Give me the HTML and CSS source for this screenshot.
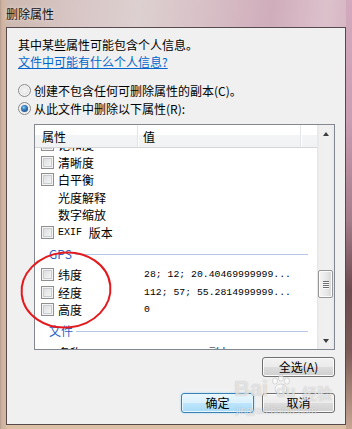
FILE: index.html
```html
<!DOCTYPE html>
<html lang="zh-CN">
<head>
<meta charset="utf-8">
<title>删除属性</title>
<link rel="stylesheet" href="styles.css">
</head>
<body>
<div class="window">
  <div class="titlebar"><span class="title">删除属性</span></div>
  <div class="client">
    <p class="intro">其中某些属性可能包含个人信息。</p>
    <a class="link">文件中可能有什么个人信息?</a>
    <div class="options">
      <div class="option"><span class="radio"></span><span>创建不包含任何可删除属性的副本(C)。</span></div>
      <div class="option"><span class="radio checked"></span><span>从此文件中删除以下属性(R):</span></div>
    </div>
    <div class="listbox">
      <div class="listmain">
        <div class="header">
          <div class="hcol c1">属性</div>
          <div class="hcol c2">值</div>
          <div class="hcol c3"></div>
        </div>
        <div class="rows">
          <div class="rows-inner">
            <div class="row"><div class="name"><span class="cb"></span>饱和度</div><div class="val"></div></div>
            <div class="row"><div class="name"><span class="cb"></span>清晰度</div><div class="val"></div></div>
            <div class="row"><div class="name"><span class="cb"></span>白平衡</div><div class="val"></div></div>
            <div class="row"><div class="name indent">光度解释</div><div class="val"></div></div>
            <div class="row"><div class="name indent">数字缩放</div><div class="val"></div></div>
            <div class="row"><div class="name"><span class="cb"></span><span class="mono">EXIF</span>&nbsp;版本</div><div class="val"></div></div>
            <div class="group"><span class="gtitle">GPS</span><span class="gline"></span></div>
            <div class="row"><div class="name"><span class="cb"></span>纬度</div><div class="val">28; 12; 20.40469999999...</div></div>
            <div class="row"><div class="name"><span class="cb"></span>经度</div><div class="val">112; 57; 55.2814999999...</div></div>
            <div class="row"><div class="name"><span class="cb"></span>高度</div><div class="val">0</div></div>
            <div class="group"><span class="gtitle">文件</span><span class="gline"></span></div>
            <div class="row"><div class="name indent">名称</div><div class="val">IMG_0012 - 副本.JPG</div></div>
          </div>
        </div>
      </div>
      <div class="scrollbar">
        <div class="sb-arrow"><span class="tri-up"></span></div>
        <div class="thumb"><span class="grip"></span><span class="grip"></span><span class="grip"></span><span class="grip"></span></div>
        <div class="sb-space"></div>
        <div class="sb-arrow"><span class="tri-down"></span></div>
      </div>
    </div>
    <div class="actions">
      <div class="btnrow first"><button class="btn">全选(A)</button></div>
      <div class="btnrow second"><button class="btn default">确定</button><button class="btn">取消</button></div>
    </div>
  </div>
  <svg class="mark" width="352" height="429" viewBox="0 0 352 429">
    <ellipse cx="66" cy="290" rx="44.5" ry="37.5" transform="rotate(-6 66 290)" fill="none" stroke="#e31b1f" stroke-width="2"/>
  </svg>
  <div class="watermark">
    <span class="wm-bai">Bai</span>
    <svg class="wm-paw" width="22" height="24" viewBox="0 0 22 24">
      <g fill="rgba(255,255,255,0.55)" stroke="rgba(140,140,140,0.35)" stroke-width="0.8">
        <ellipse cx="5" cy="7" rx="2.5" ry="3.2"/>
        <ellipse cx="11" cy="4" rx="2.5" ry="3.2"/>
        <ellipse cx="17" cy="7" rx="2.5" ry="3.2"/>
        <ellipse cx="11" cy="15" rx="6" ry="5"/>
      </g>
    </svg>
    <span class="wm-du">du</span>
    <span class="wm-jy">经验</span>
    <span class="wm-url">jingyan.baidu.com</span>
  </div>
</div>
</body>
</html>
```

FILE: styles.css
```css
* { box-sizing: border-box; margin: 0; padding: 0; }
html, body { width: 352px; height: 429px; overflow: hidden; }
body {
  font-family: "Noto Sans CJK SC", "Noto Sans", sans-serif;
  font-size: 12px;
  color: #000;
  background: #d8c4c4;
}

.window {
  position: relative;
  width: 352px;
  height: 429px;
  display: flex;
  flex-direction: column;
  padding: 0 6px 4px 6px;
  background:
    linear-gradient(180deg, #d3aabd 0, #c99db2 120px, #a47c8a 220px, #6c4a4f 290px, #7b5a58 350px, #c8a693 429px) right top / 6px 100% no-repeat,
    linear-gradient(90deg, #b59c8e 0, #cfb4a3 2px, #d4b7a1 6px) left top / 6px 100% no-repeat,
    linear-gradient(180deg, rgba(0,0,0,0) 424px, #dcc0a6 424px),
    linear-gradient(95deg, #cbb7ad 0%, #d7c5c4 18%, #ddd0d0 36%, #d8c1c7 52%, #d0adbb 70%, #dcc1cb 84%, #cda4b6 100%);
}

.titlebar {
  height: 27px;
  display: flex;
  align-items: center;
}
.title {
  font-size: 12px;
  line-height: 14px;
  color: #111;
  text-shadow: 0 0 4px rgba(255,255,255,0.7);
}

.client {
  flex: 1;
  border: 1px solid #564a4c;
  background: #f0f0f0;
  padding: 8px 10px 0 11px;
  display: flex;
  flex-direction: column;
}

.intro { line-height: 17px; height: 17px; }
.link {
  display: block;
  line-height: 17px;
  height: 17px;
  color: #0066cc;
  text-decoration: underline;
  width: max-content;
}

.options { margin-top: 11px; display: flex; flex-direction: column; }
.option { display: flex; align-items: center; height: 18px; gap: 3px; }
.radio {
  width: 13px;
  height: 13px;
  border-radius: 50%;
  border: 1px solid #8a8a8a;
  background: radial-gradient(circle at 50% 50%, #f6f6f6 0, #e4e4e4 60%, #d2d2d2 100%);
  box-shadow: inset 0 0 0 1px #f8f8f8;
  display: flex;
  align-items: center;
  justify-content: center;
  flex: none;
}
.radio.checked::after {
  content: "";
  width: 7px;
  height: 7px;
  border-radius: 50%;
  background: radial-gradient(circle at 40% 35%, #8fd3f7 0, #3a7fc0 35%, #163f70 100%);
}

.listbox {
  margin-top: 7px;
  margin-left: 16px;
  width: 301px;
  height: 226px;
  border: 1px solid #828790;
  display: flex;
  background: #fff;
}
.listmain { flex: 1; display: flex; flex-direction: column; min-width: 0; }
.header {
  height: 23px;
  display: flex;
  border-bottom: 1px solid #d5d5d5;
  background: linear-gradient(180deg, #ffffff 0, #ffffff 10px, #f3f4f6 10px, #f1f2f4 100%);
}
.hcol {
  display: flex;
  align-items: center;
  padding-top: 1px;
  border-right: 1px solid #e2e4e7;
  box-shadow: 1px 0 0 #ffffff;
}
.c1 { width: 103px; padding-left: 7px; }
.c2 { width: 163px; padding-left: 5px; }
.c3 { flex: 1; border-right: none; box-shadow: none; }

.rows { flex: 1; overflow: hidden; background: #fff; }
.rows-inner { margin-top: -12px; }
.row {
  height: 17.5px;
  display: grid;
  grid-template-columns: 103px 1fr;
  align-items: center;
}
.name {
  display: flex;
  align-items: center;
  gap: 4px;
  padding-left: 6px;
  white-space: nowrap;
}
.name.indent { padding-left: 23px; }
.cb {
  width: 13px;
  height: 13px;
  flex: none;
  border: 1px solid #8f8f8f;
  background: linear-gradient(135deg, #d6d8db 0, #eceded 60%, #f7f7f7 100%);
  box-shadow: inset 0 0 0 1px #f4f4f4, inset 0 0 0 2px #c9ccd0;
}
.mono { font-family: "Liberation Mono", monospace; font-size: 10px; }
.val {
  padding-left: 6px;
  font-family: "Liberation Mono", monospace;
  font-size: 9.8px;
  white-space: nowrap;
  overflow: hidden;
}

.group {
  height: 25px;
  display: flex;
  align-items: center;
  padding-left: 14px;
  padding-right: 9px;
  gap: 3px;
}
.gtitle { color: #2d5fc6; line-height: 14px; }
.gline { flex: 1; height: 1px; background: #b7c6e6; margin-top: 1px; }

.scrollbar {
  width: 17px;
  flex: none;
  display: flex;
  flex-direction: column;
  align-items: center;
  background: linear-gradient(90deg, #e4e4e4 0, #efefef 2px, #f0f0f0 14px, #e8e8e8 17px);
}
.sb-arrow {
  width: 17px;
  height: 17px;
  display: flex;
  align-items: center;
  justify-content: center;
  flex: none;
}
.tri-up {
  width: 0; height: 0;
  border-left: 3.5px solid transparent;
  border-right: 3.5px solid transparent;
  border-bottom: 4px solid #3d3d3d;
}
.tri-down {
  width: 0; height: 0;
  border-left: 3.5px solid transparent;
  border-right: 3.5px solid transparent;
  border-top: 4px solid #3d3d3d;
}
.thumb {
  margin-top: 128px;
  width: 15px;
  height: 28px;
  flex: none;
  border: 1px solid #979797;
  border-radius: 2px;
  background: linear-gradient(90deg, #f5f5f5 0, #e9e9e9 50%, #d8d8d8 100%);
  box-shadow: inset 0 0 0 1px #fbfbfb;
  display: flex;
  flex-direction: column;
  align-items: center;
  justify-content: center;
  gap: 1px;
}
.grip { width: 6px; height: 1px; background: #6e6e6e; box-shadow: 0 1px 0 #fafafa; }
.sb-space { flex: 1; }

.actions { display: flex; flex-direction: column; align-items: flex-end; }
.btnrow { display: flex; gap: 8px; }
.btnrow.first { margin-top: 7px; }
.btnrow.second { margin-top: 16px; }
.btn {
  width: 73px;
  height: 20px;
  font-family: "Noto Sans CJK SC", "Noto Sans", sans-serif;
  font-size: 12px;
  line-height: 16px;
  color: #000;
  border: 1px solid #707070;
  border-radius: 3px;
  background: linear-gradient(180deg, #f2f2f2 0, #ebebeb 50%, #dddddd 50%, #cfcfcf 100%);
  box-shadow: inset 0 0 0 1px #fbfbfb;
}
.btn.default {
  border-color: #3c7fb1;
  background: linear-gradient(180deg, #eaf6fd 0, #d9f0fc 50%, #bee6fd 50%, #a7d9f5 100%);
  box-shadow: inset 0 0 0 1px #e8f6fd, 0 0 2px #8fd0f5;
}

.mark { position: absolute; left: 0; top: 0; pointer-events: none; }

.watermark {
  position: absolute;
  left: 232px;
  top: 370px;
  width: 115px;
  height: 50px;
  pointer-events: none;
  color: rgba(255,255,255,0.6);
  text-shadow: 0 0 1px rgba(130,130,130,0.55);
}
.wm-bai {
  position: absolute; left: 2px; top: 7px;
  font-family: "Liberation Sans", sans-serif; font-weight: bold; font-size: 22px; line-height: 24px;
}
.wm-paw { position: absolute; left: 38px; top: 4px; }
.wm-du {
  position: absolute; left: 44px; top: 13px;
  font-family: "Liberation Sans", sans-serif; font-weight: bold; font-size: 16px; line-height: 18px;
}
.wm-jy {
  position: absolute; left: 70px; top: 14px;
  font-size: 15px; line-height: 18px; font-weight: bold;
}
.wm-url {
  position: absolute; left: 4px; top: 35px;
  font-family: "Liberation Sans", sans-serif; font-size: 10px; line-height: 12px;
}
```
